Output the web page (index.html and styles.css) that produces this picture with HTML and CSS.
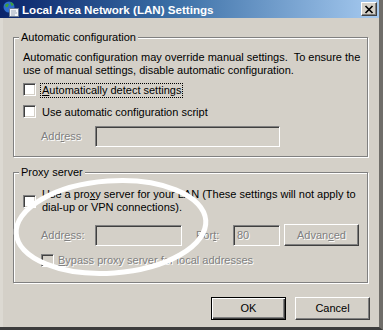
FILE: index.html
```html
<!DOCTYPE html>
<html lang="en">
<head>
  <meta charset="UTF-8">
  <meta name="viewport" content="width=device-width, initial-scale=1.0">
  <title>Local Area Network (LAN) Settings</title>
  <link rel="stylesheet" href="styles.css">
</head>
<body>
  <div class="window">
    <div class="titlebar">
      <svg class="title-icon" width="16" height="16" viewBox="0 0 16 16">
        <circle cx="6" cy="6" r="5.5" fill="#2f6fcf"/>
        <path d="M2 4 Q4 1.5 6 3 L5 5.5 L3 6.5 Z M7 1 Q10 1.5 11 4 L8.5 5 Z M6 8 L9 7.5 L8 11 Q6.5 11.5 6 10 Z" fill="#3ea23a"/>
        <rect x="6.5" y="7.5" width="9" height="8" fill="#f2f4f8" stroke="#6b7c94"/>
        <path d="M8 10h5M8 12h6M8 14h4" stroke="#9aa6b8"/>
      </svg>
      <span class="title-text">Local Area Network (LAN) Settings</span>
      <span class="close-btn">
        <svg width="10" height="9" viewBox="0 0 10 9">
          <path d="M1.5 1 L8.5 8 M8.5 1 L1.5 8" stroke="#000" stroke-width="1.7"/>
        </svg>
      </span>
    </div>

    <div class="client">
      <fieldset class="group group-auto">
        <legend>Automatic configuration</legend>
        <div class="group-body">
          <p class="desc">Automatic configuration may override manual settings.&nbsp; To ensure the<br>use of manual settings, disable automatic configuration.</p>
          <div class="check-row row-detect">
            <span class="checkbox"></span>
            <span class="check-label focused"><u>A</u>utomatically detect settings</span>
          </div>
          <div class="check-row row-script">
            <span class="checkbox"></span>
            <span class="check-label">Use automatic configuration script</span>
          </div>
          <div class="field-row row-address">
            <span class="field-label disabled">Add<u>r</u>ess</span>
            <span class="edit edit-wide"></span>
          </div>
        </div>
      </fieldset>

      <fieldset class="group group-proxy">
        <legend>Proxy server</legend>
        <div class="group-body">
          <div class="check-row row-proxy">
            <span class="checkbox"></span>
            <span class="check-label">Use a pro<u>x</u>y server for your LAN (These settings will not apply to<br>dial-up or VPN connections).</span>
          </div>
          <div class="field-row row-proxy-address">
            <span class="field-label disabled">Addr<u>e</u>ss:</span>
            <span class="edit edit-address"></span>
            <span class="field-label port-label disabled">Por<u>t</u>:</span>
            <span class="edit edit-port disabled">80</span>
            <span class="btn btn-advanced disabled">Advan<u>c</u>ed</span>
          </div>
          <div class="check-row row-bypass">
            <span class="checkbox checkbox-off"></span>
            <span class="check-label disabled"><u>B</u>ypass proxy server for local addresses</span>
          </div>
        </div>
      </fieldset>

      <div class="buttons">
        <span class="btn btn-default">OK</span>
        <span class="btn">Cancel</span>
      </div>
    </div>

    <svg class="scribble" width="383" height="330" viewBox="0 0 383 330">
      <ellipse cx="111" cy="227" rx="95" ry="46" transform="rotate(-4 111 227)" fill="none" stroke="#fff" stroke-width="5"/>
    </svg>
  </div>
</body>
</html>
```

FILE: styles.css
```css
body {
  margin: 0;
  background-color: #d4d0c8;
  color: #000;
  font-family: "Liberation Sans", Arial, sans-serif;
  font-size: 11px;
  line-height: 13px;
}

.window {
  position: relative;
  display: flex;
  flex-direction: column;
  width: 383px;
  height: 330px;
  box-sizing: border-box;
  background-color: #d4d0c8;
  border-right: 4px solid #6f6d69;
  border-bottom: 3px solid #3c3c3c;
  box-shadow: inset 3px 0 #dcd9d2;
  overflow: hidden;
}

/* title bar */
.titlebar {
  display: flex;
  align-items: center;
  height: 18px;
  flex: none;
  background: linear-gradient(to right, #0a246a, #3a6ea5 45%, #a6caf0);
  color: #fff;
}
.title-icon { margin-left: 3px; margin-right: 3px; flex: none; }
.title-text { font-weight: bold; font-size: 11.6px; white-space: nowrap; }
.close-btn {
  display: flex;
  align-items: center;
  justify-content: center;
  margin-left: auto;
  margin-right: 2px;
  width: 16px;
  height: 14px;
  box-sizing: border-box;
  background-color: #d4d0c8;
  border: 1px solid;
  border-color: #fff #404040 #404040 #fff;
  box-shadow: inset -1px -1px #808080;
}

.client {
  display: flex;
  flex-direction: column;
  padding: 13px 11px 0 13px;
}

/* group boxes */
.group {
  margin: 0;
  padding: 0;
  min-width: 0;
  border: 1px solid #808080;
  box-shadow: inset 1px 1px #fff, 1px 1px #fff;
}
.group legend {
  margin-left: 5px;
  padding: 0 2px;
  line-height: 13px;
  background-color: #d4d0c8;
}
.group-body { display: flex; flex-direction: column; padding-left: 9px; }
.group-auto .group-body { padding-bottom: 9px; }
.group-proxy { margin-top: 9px; }
.group-proxy .group-body { padding-bottom: 14px; }

.desc { margin: 7px 0 0; white-space: nowrap; }

.check-row { display: flex; align-items: flex-start; gap: 4px; }
.check-label {
  padding: 0 1px;
  border: 1px solid transparent;
  white-space: nowrap;
}
.check-label.focused { border: 1px dotted #000; }
.row-detect { margin-top: 6px; }
.row-script { margin-top: 7px; }
.row-proxy { margin-top: 8px; align-items: center; }
.row-bypass { margin-top: 7px; margin-left: 18px; gap: 2px; align-items: center; }

.checkbox {
  flex: none;
  width: 13px;
  height: 13px;
  box-sizing: border-box;
  background-color: #fff;
  border: 1px solid;
  border-color: #808080 #fff #fff #808080;
  box-shadow: inset 1px 1px #404040, inset -1px -1px #d4d0c8;
}
.checkbox-off { background-color: #d4d0c8; }

.field-row { display: flex; align-items: center; margin-left: 18px; }
.row-address { margin-top: 6px; }
.row-proxy-address { margin-top: 9px; }
.field-label { width: 54px; flex: none; white-space: nowrap; }
.port-label { width: 37px; margin-left: 14px; }

.edit {
  display: block;
  height: 21px;
  box-sizing: border-box;
  padding: 2px 3px;
  line-height: 15px;
  background-color: #d4d0c8;
  border: 1px solid;
  border-color: #808080 #fff #fff #808080;
  box-shadow: inset 1px 1px #404040, inset -1px -1px #d4d0c8;
}
.edit-wide { width: 185px; }
.edit-address { width: 87px; }
.edit-port { width: 47px; }

.disabled { color: #808080; text-shadow: 1px 1px 0 #fff; }

/* push buttons */
.btn {
  display: flex;
  align-items: center;
  justify-content: center;
  width: 75px;
  height: 23px;
  box-sizing: border-box;
  background-color: #d4d0c8;
  border: 1px solid;
  border-color: #fff #404040 #404040 #fff;
  box-shadow: inset -1px -1px #808080;
}
.btn-default {
  border-color: #000;
  box-shadow: inset 1px 1px #fff, inset -1px -1px #404040, inset -2px -2px #808080;
}
.btn-advanced { height: 22px; margin-left: 4px; }

.buttons {
  display: flex;
  justify-content: flex-end;
  gap: 9px;
  margin-top: 14px;
  margin-right: -2px;
}

.scribble { position: absolute; top: 0; left: 0; pointer-events: none; }
```
